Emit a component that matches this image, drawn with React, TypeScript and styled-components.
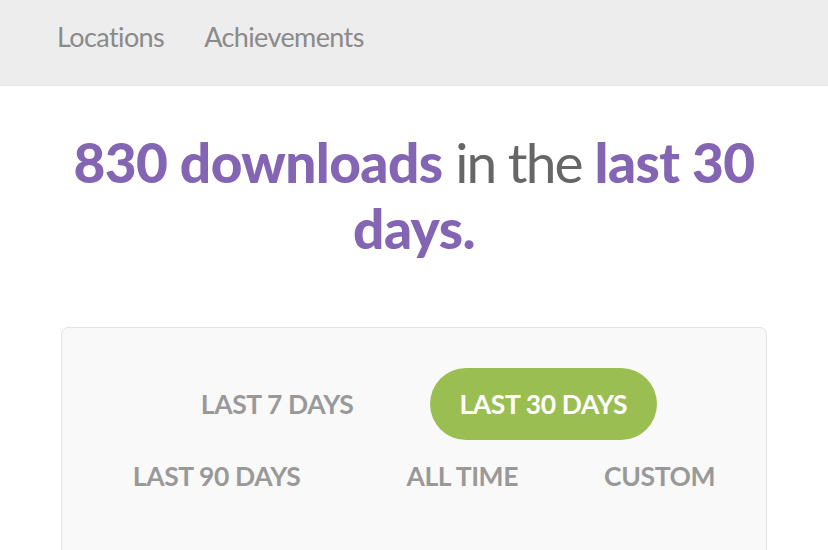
import React from "react";
import styled, { createGlobalStyle } from "styled-components";

const Global = createGlobalStyle`
  html, body { margin: 0; padding: 0; background: #fff; }
  body { font-family: Lato, "Open Sans", sans-serif; }
`;

const Page = styled.div`
  width: 828px;
  height: 550px;
  overflow: hidden;
  display: flex;
  flex-direction: column;
`;

const TopBar = styled.nav`
  height: 86px;
  flex: none;
  background: #ededed;
  border-bottom: 1px solid #e6e6e6;
  box-sizing: border-box;
  display: flex;
  align-items: center;
  padding: 0 0 12px 57px;
  gap: 40px;
`;

const NavLink = styled.a`
  font-size: 27px;
  color: #8a8a8a;
  text-decoration: none;
  letter-spacing: -0.6px;
`;

const Headline = styled.h1`
  margin: 43px 0 0;
  text-align: center;
  font-size: 55px;
  line-height: 66px;
  font-weight: 700;
  letter-spacing: -0.6px;
  color: #666;
  padding: 0 50px;
`;

const Accent = styled.span`
  color: #8365b3;
  font-weight: 900;
`;

const Plain = styled.span`
  font-weight: 400;
  letter-spacing: -1.8px;
  color: #666;
`;

const Card = styled.section`
  margin: 66px 61px 0;
  height: 300px;
  flex: none;
  background: #f9f9f9;
  border: 1px solid #e3e3e3;
  border-radius: 7px;
  display: flex;
  flex-direction: column;
  align-items: center;
  padding-top: 40px;
`;

const Row = styled.div<{ $gap: number; $offset?: number }>`
  display: flex;
  justify-content: center;
  align-items: center;
  gap: ${(p) => p.$gap}px;
  padding-left: ${(p) => p.$offset ?? 0}px;
`;

const Option = styled.button<{ $active?: boolean; $shift?: number }>`
  font-family: Lato, "Open Sans", sans-serif;
  font-weight: 700;
  font-size: 26.5px;
  letter-spacing: -0.4px;
  text-transform: uppercase;
  border: none;
  height: 72px;
  padding: 0 30px;
  border-radius: 36px;
  cursor: pointer;
  background: ${(p) => (p.$active ? "#9bbe52" : "transparent")};
  color: ${(p) => (p.$active ? "#fff" : "#999")};
  margin-left: ${(p) => p.$shift ?? 0}px;
`;

export default function App() {
  return (
    <Page>
      <Global />
      <TopBar>
        <NavLink href="#">Locations</NavLink>
        <NavLink href="#">Achievements</NavLink>
      </TopBar>
      <Headline>
        <Accent>830 downloads</Accent> <Plain>in the</Plain>{" "}
        <Accent>last 30 days.</Accent>
      </Headline>
      <Card>
        <Row $gap={46}>
          <Option>Last 7 days</Option>
          <Option $active>Last 30 days</Option>
        </Row>
        <Row $gap={46} $offset={20}>
          <Option>Last 90 days</Option>
          <Option>All time</Option>
          <Option $shift={-20}>Custom</Option>
        </Row>
      </Card>
    </Page>
  );
}
